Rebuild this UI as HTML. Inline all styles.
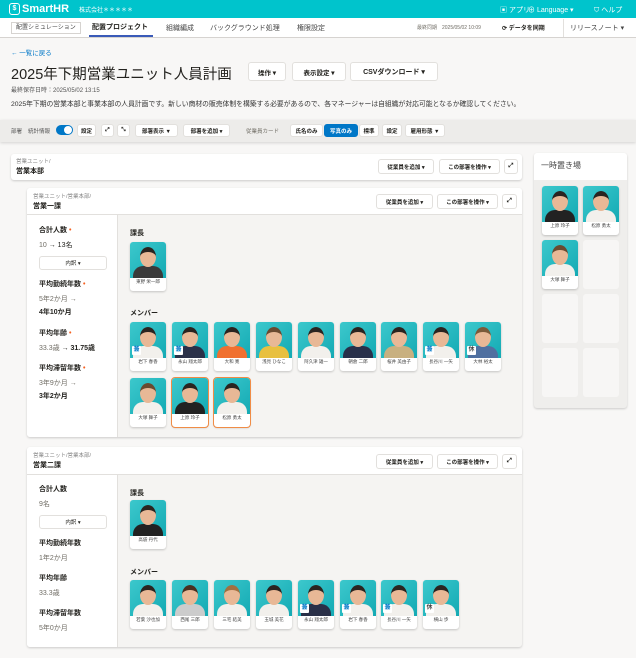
<!DOCTYPE html>
<html><head><meta charset="utf-8">
<style>
*{box-sizing:border-box;margin:0;padding:0}
body{width:636px;height:658px;overflow:hidden;background:#f8f7f6;font-family:"Liberation Sans","Noto Sans CJK JP",sans-serif;color:#23221e;position:relative;font-size:7px}
.a{position:absolute}
.top{left:0;top:0;width:636px;height:18px;background:#00c4cc;color:#fff}
.nav{left:0;top:18px;width:636px;height:20px;background:#fff;border-bottom:1px solid #d6d3d0}
.btn{position:absolute;background:#fff;border:1px solid #e2e0dd;border-radius:3px;font-weight:bold;display:flex;align-items:center;justify-content:center;white-space:nowrap;color:#23221e}
.tb{left:0;top:120px;width:636px;height:22px;background:#edecea;box-shadow:0 1px 3px rgba(0,0,0,.15)}
.card{position:absolute;background:#fff;border-radius:3px;box-shadow:0 1px 2px rgba(0,0,0,.18)}
.sb{font-size:5.5px;height:14px;top:6px}
.c{position:absolute;width:36px;height:49px;background:#fff;border-radius:3px;box-shadow:0 1px 2px rgba(0,0,0,.2);overflow:hidden}
.c.o{outline:1px solid #f08c46}
.p{position:absolute;left:0;top:0;width:36px;height:36px;background:linear-gradient(135deg,#3cc8cc,#14aab4);overflow:hidden}
.h{position:absolute;left:10px;top:5px;width:16px;height:20px;border-radius:50%;background:#e8b896;border-top:5px solid #2a2420}
.s{position:absolute;left:3px;top:24px;width:30px;height:16px;border-radius:10px 10px 0 0;background:#f2f0ec}
.n{position:absolute;left:0;top:37px;width:36px;text-align:center;font-size:4.5px;color:#444}
.b{position:absolute;left:2px;top:24px;width:9px;height:9px;background:#fff;color:#0077c7;font-size:6px;font-weight:bold;text-align:center;line-height:9px;border-radius:1px}
.lab{font-size:7px;font-weight:bold;color:#23221e}
.stat{font-size:7px}
.g{color:#706d65}
.dot{color:#f56121;font-size:7px}
</style></head><body>

<div class="a top">
 <div class="a" style="left:9px;top:3px;width:11px;height:12px;border:1.5px solid #fff;border-radius:3px;font-size:7px;font-weight:bold;text-align:center;line-height:9px">$</div>
 <div class="a" style="left:22px;top:3px;font-size:11px;font-weight:bold">SmartHR</div>
 <div class="a" style="left:79px;top:5px;font-size:6px">株式会社＊＊＊＊＊</div>
 <div class="a" style="left:500px;top:5px;font-size:7px">▣ アプリ</div>
 <div class="a" style="left:528px;top:5px;font-size:7px">⊕ Language ▾</div>
 <div class="a" style="left:594px;top:5px;font-size:7px">⛉ ヘルプ</div>
</div>
<div class="a nav">
 <div class="a" style="left:11px;top:4px;height:12px;padding:0 4px;border:1px solid #d6d3d0;font-size:6px;line-height:10px;color:#444">配置シミュレーション</div>
 <div class="a" style="left:92px;top:4px;font-size:7px;font-weight:bold">配置プロジェクト</div>
 <div class="a" style="left:89px;top:17px;width:64px;height:2px;background:#3a5ab8"></div>
 <div class="a" style="left:166px;top:5px;font-size:7px;color:#444">組織編成</div>
 <div class="a" style="left:210px;top:5px;font-size:7px;color:#444">バックグラウンド処理</div>
 <div class="a" style="left:297px;top:5px;font-size:7px;color:#444">権限設定</div>
 <div class="a" style="left:417px;top:6px;font-size:5px;color:#706d65">最終同期　2025/05/02 10:09</div>
 <div class="a" style="left:502px;top:5px;font-size:6px;font-weight:bold">⟳ データを同期</div>
 <div class="a" style="left:563px;top:1px;width:1px;height:18px;background:#e2e0dd"></div>
 <div class="a" style="left:570px;top:5px;font-size:7px;color:#444">リリースノート ▾</div>
</div>

<div class="a" style="left:11px;top:47px;font-size:6.5px;color:#0077c7">← 一覧に戻る</div>
<div class="a" style="left:11px;top:63px;font-size:14.5px">2025年下期営業ユニット人員計画</div>
<div class="btn" style="left:248px;top:62px;width:38px;height:19px;font-size:6.5px">操作 ▾</div>
<div class="btn" style="left:292px;top:62px;width:54px;height:19px;font-size:6.5px">表示設定 ▾</div>
<div class="btn" style="left:350px;top:62px;width:88px;height:19px;font-size:7px">CSVダウンロード ▾</div>
<div class="a" style="left:11px;top:85px;font-size:6px;color:#555">最終保存日時：2025/05/02 13:15</div>
<div class="a" style="left:11px;top:98px;font-size:6.8px;color:#333">2025年下期の営業本部と事業本部の人員計画です。新しい商材の販売体制を構築する必要があるので、各マネージャーは自組織が対応可能となるか確認してください。</div>

<div class="a tb">
 <div class="a" style="left:11px;top:7px;font-size:5.5px;color:#555">部署</div>
 <div class="a" style="left:28px;top:7px;font-size:5.5px;color:#555">統計情報</div>
 <div class="a" style="left:56px;top:5px;width:17px;height:10px;border-radius:5px;background:#0077c7"><div class="a" style="left:8px;top:1px;width:8px;height:8px;border-radius:50%;background:#fff"></div></div>
 <div class="btn sb" style="left:77px;width:19px;height:13px;top:4px">設定</div>
 <div class="btn sb" style="left:101px;width:13px;height:13px;top:4px">⤢</div>
 <div class="btn sb" style="left:117px;width:13px;height:13px;top:4px">⤡</div>
 <div class="btn sb" style="left:135px;width:43px;height:13px;top:4px">部署表示 ▼</div>
 <div class="btn sb" style="left:183px;width:47px;height:13px;top:4px">部署を追加 ▾</div>
 <div class="a" style="left:246px;top:7px;font-size:5.5px;color:#706d65">従業員カード</div>
 <div class="btn sb" style="left:290px;width:33px;height:13px;top:4px">氏名のみ</div>
 <div class="btn sb" style="left:324px;width:34px;height:13px;top:4px;background:#0077c7;color:#fff;border-color:#0077c7">写真のみ</div>
 <div class="btn sb" style="left:359px;width:20px;height:13px;top:4px">標準</div>
 <div class="btn sb" style="left:382px;width:20px;height:13px;top:4px">設定</div>
 <div class="btn sb" style="left:405px;width:40px;height:13px;top:4px">雇用形態 ▼</div>
</div>

<div class="card" style="left:11px;top:154px;width:511px;height:26px">
 <div class="a" style="left:5px;top:3px;font-size:5.5px;color:#888">営業ユニット/</div>
 <div class="a" style="left:5px;top:12px;font-size:7px;font-weight:bold">営業本部</div>
 <div class="btn" style="left:367px;top:5px;width:56px;height:15px;font-size:5.5px">従業員を追加 ▾</div>
 <div class="btn" style="left:428px;top:5px;width:61px;height:15px;font-size:5.5px">この部署を操作 ▾</div>
 <div class="btn" style="left:493px;top:5px;width:14px;height:15px;font-size:6px">⤢</div>
</div>

<div class="card" style="left:534px;top:153px;width:93px;height:255px;background:#efeeec">
 <div class="a" style="left:0;top:0;width:93px;height:27px;background:#fff;border-radius:3px 3px 0 0"></div>
 <div class="a" style="left:7px;top:7px;font-size:8px;color:#444">一時置き場</div>
 <div class="a" style="left:8px;top:141px;width:36px;height:49px;background:#f7f6f5;border-radius:3px"></div>
 <div class="a" style="left:49px;top:87px;width:36px;height:49px;background:#f7f6f5;border-radius:3px"></div>
 <div class="a" style="left:49px;top:141px;width:36px;height:49px;background:#f7f6f5;border-radius:3px"></div>
 <div class="a" style="left:8px;top:195px;width:36px;height:49px;background:#f7f6f5;border-radius:3px"></div>
 <div class="a" style="left:49px;top:195px;width:36px;height:49px;background:#f7f6f5;border-radius:3px"></div>
 <div class="c" style="left:8px;top:33px"><div class="p"><div class="s" style="background:#222"></div><div class="h"></div></div><div class="n">上原 玲子</div></div>
 <div class="c" style="left:49px;top:33px"><div class="p"><div class="s"></div><div class="h"></div></div><div class="n">松原 勇太</div></div>
 <div class="c" style="left:8px;top:87px"><div class="p"><div class="s"></div><div class="h" style="border-top-color:#6a4a30"></div></div><div class="n">大塚 舞子</div></div>
</div>

<div class="card" style="left:27px;top:188px;width:495px;height:249px;background:#f5f4f2">
 <div class="a" style="left:0;top:0;width:495px;height:27px;background:#fff;border-bottom:1px solid #e2e0dd;border-radius:3px 3px 0 0"></div>
 <div class="a" style="left:6px;top:4px;font-size:5.5px;color:#888">営業ユニット/営業本部/</div>
 <div class="a" style="left:6px;top:13px;font-size:7px;font-weight:bold">営業一課</div>
 <div class="btn" style="left:349px;top:6px;width:57px;height:15px;font-size:5.5px">従業員を追加 ▾</div>
 <div class="btn" style="left:410px;top:6px;width:61px;height:15px;font-size:5.5px">この部署を操作 ▾</div>
 <div class="btn" style="left:475px;top:6px;width:15px;height:15px;font-size:6px">⤢</div>
 <div class="a" style="left:0;top:27px;width:91px;height:222px;background:#fff;border-right:1px solid #e2e0dd;border-radius:0 0 0 3px"></div>
 <div class="a lab" style="left:12px;top:37px">合計人数 <span class="dot">•</span></div>
 <div class="a stat" style="left:12px;top:52px"><span class="g">10</span> → 13名</div>
 <div class="btn" style="left:12px;top:68px;width:68px;height:14px;font-size:5.5px;font-weight:normal">内訳 ▾</div>
 <div class="a lab" style="left:12px;top:91px">平均勤続年数 <span class="dot">•</span></div>
 <div class="a stat g" style="left:12px;top:106px">5年2か月 →</div>
 <div class="a stat" style="left:12px;top:119px;font-weight:bold">4年10か月</div>
 <div class="a lab" style="left:12px;top:140px">平均年齢 <span class="dot">•</span></div>
 <div class="a stat" style="left:12px;top:155px"><span class="g">33.3歳</span> → <b>31.75歳</b></div>
 <div class="a lab" style="left:12px;top:175px">平均滞留年数 <span class="dot">•</span></div>
 <div class="a stat g" style="left:12px;top:190px">3年9か月 →</div>
 <div class="a stat" style="left:12px;top:203px;font-weight:bold">3年2か月</div>
 <div class="a lab" style="left:103px;top:40px">課長</div>
 <div class="a lab" style="left:103px;top:120px">メンバー</div>
</div>
<div class="c" style="left:130px;top:242px"><div class="p"><div class="s" style="background:#3a3a3a"></div><div class="h"></div></div><div class="n">東野 栄一郎</div></div>
<div class="c" style="left:130px;top:322px"><div class="p"><div class="s"></div><div class="h"></div><div class="b">兼</div></div><div class="n">岩下 春香</div></div>
<div class="c" style="left:172px;top:322px"><div class="p"><div class="s" style="background:#2a3048"></div><div class="h"></div><div class="b">兼</div></div><div class="n">永山 翔太郎</div></div>
<div class="c" style="left:214px;top:322px"><div class="p"><div class="s" style="background:#f07030"></div><div class="h"></div></div><div class="n">大和 寛</div></div>
<div class="c" style="left:256px;top:322px"><div class="p"><div class="s" style="background:#e8c040"></div><div class="h" style="border-top-color:#6a4a30"></div></div><div class="n">浅見 ひなこ</div></div>
<div class="c" style="left:298px;top:322px"><div class="p"><div class="s"></div><div class="h"></div></div><div class="n">阿久津 雄一</div></div>
<div class="c" style="left:340px;top:322px"><div class="p"><div class="s" style="background:#28304a"></div><div class="h"></div></div><div class="n">朝倉 二郎</div></div>
<div class="c" style="left:381px;top:322px"><div class="p"><div class="s" style="background:#c8b080"></div><div class="h"></div></div><div class="n">桜井 美由子</div></div>
<div class="c" style="left:423px;top:322px"><div class="p"><div class="s"></div><div class="h"></div><div class="b">兼</div></div><div class="n">長谷川 一矢</div></div>
<div class="c" style="left:465px;top:322px"><div class="p"><div class="s" style="background:#5070a0"></div><div class="h" style="border-top-color:#7a5a3a"></div><div class="b" style="color:#444">休</div></div><div class="n">大林 裕太</div></div>
<div class="c" style="left:130px;top:378px"><div class="p"><div class="s"></div><div class="h" style="border-top-color:#6a4a30"></div></div><div class="n">大塚 舞子</div></div>
<div class="c o" style="left:172px;top:378px"><div class="p"><div class="s" style="background:#222"></div><div class="h"></div></div><div class="n">上原 玲子</div></div>
<div class="c o" style="left:214px;top:378px"><div class="p"><div class="s"></div><div class="h"></div></div><div class="n">松原 勇太</div></div>

<div class="card" style="left:27px;top:447px;width:495px;height:200px;background:#f5f4f2">
 <div class="a" style="left:0;top:0;width:495px;height:28px;background:#fff;border-bottom:1px solid #e2e0dd;border-radius:3px 3px 0 0"></div>
 <div class="a" style="left:6px;top:4px;font-size:5.5px;color:#888">営業ユニット/営業本部/</div>
 <div class="a" style="left:6px;top:13px;font-size:7px;font-weight:bold">営業二課</div>
 <div class="btn" style="left:349px;top:7px;width:57px;height:15px;font-size:5.5px">従業員を追加 ▾</div>
 <div class="btn" style="left:410px;top:7px;width:61px;height:15px;font-size:5.5px">この部署を操作 ▾</div>
 <div class="btn" style="left:475px;top:7px;width:15px;height:15px;font-size:6px">⤢</div>
 <div class="a" style="left:0;top:28px;width:91px;height:172px;background:#fff;border-right:1px solid #e2e0dd;border-radius:0 0 0 3px"></div>
 <div class="a lab" style="left:12px;top:37px">合計人数</div>
 <div class="a stat g" style="left:12px;top:52px">9名</div>
 <div class="btn" style="left:12px;top:68px;width:68px;height:14px;font-size:5.5px;font-weight:normal">内訳 ▾</div>
 <div class="a lab" style="left:12px;top:91px">平均勤続年数</div>
 <div class="a stat g" style="left:12px;top:106px">1年2か月</div>
 <div class="a lab" style="left:12px;top:126px">平均年齢</div>
 <div class="a stat g" style="left:12px;top:141px">33.3歳</div>
 <div class="a lab" style="left:12px;top:161px">平均滞留年数</div>
 <div class="a stat g" style="left:12px;top:176px">5年0か月</div>
 <div class="a lab" style="left:103px;top:41px">課長</div>
 <div class="a lab" style="left:103px;top:120px">メンバー</div>
</div>
<div class="c" style="left:130px;top:500px"><div class="p"><div class="s" style="background:#222"></div><div class="h"></div></div><div class="n">高袋 丹代</div></div>
<div class="c" style="left:130px;top:580px"><div class="p"><div class="s"></div><div class="h"></div></div><div class="n">若葉 沙也加</div></div>
<div class="c" style="left:172px;top:580px"><div class="p"><div class="s" style="background:#ccc"></div><div class="h" style="border-top-color:#4a3020"></div></div><div class="n">西尾 三郎</div></div>
<div class="c" style="left:214px;top:580px"><div class="p"><div class="s"></div><div class="h" style="border-top-color:#a07040"></div></div><div class="n">三宅 結美</div></div>
<div class="c" style="left:256px;top:580px"><div class="p"><div class="s"></div><div class="h"></div></div><div class="n">玉城 美花</div></div>
<div class="c" style="left:298px;top:580px"><div class="p"><div class="s" style="background:#2a3048"></div><div class="h"></div><div class="b">兼</div></div><div class="n">永山 翔太郎</div></div>
<div class="c" style="left:340px;top:580px"><div class="p"><div class="s"></div><div class="h"></div><div class="b">兼</div></div><div class="n">岩下 春香</div></div>
<div class="c" style="left:381px;top:580px"><div class="p"><div class="s"></div><div class="h"></div><div class="b">兼</div></div><div class="n">長谷川 一矢</div></div>
<div class="c" style="left:423px;top:580px"><div class="p"><div class="s"></div><div class="h"></div><div class="b" style="color:#444">休</div></div><div class="n">横山 歩</div></div>

</body></html>
